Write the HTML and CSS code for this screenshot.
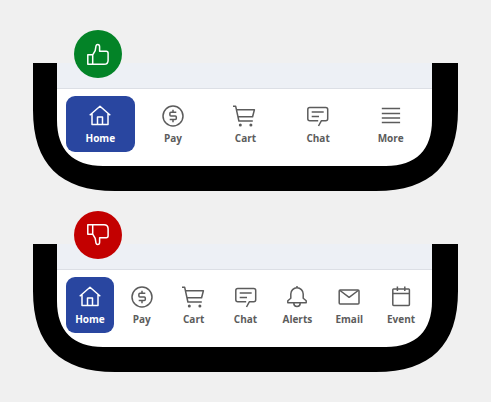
FILE: index.html
```html
<!DOCTYPE html>
<html lang="en">
<head>
<meta charset="utf-8">
<title>Bottom navigation</title>
<link rel="stylesheet" href="styles.css">
</head>
<body>
<svg class="symbols" aria-hidden="true">
  <symbol id="home" viewBox="0 0 24 24"><path d="M1.7 11.3 12 2.2l10.3 9.1M4 9.8v10.7h16V9.8M9.5 20.5V13h5v7.5"/></symbol>
  <symbol id="pay" viewBox="0 0 24 24"><circle cx="12" cy="12" r="10"/><path d="M15.3 8.3H9.9q-1 0-1 1v1.6q0 1 1 1h4.4q1 0 1 1v1.7q0 1-1 1H8.7M12 5.8v2.5m0 7.3v2.6"/></symbol>
  <symbol id="cart" viewBox="0 0 24 24"><path d="M0 2.3h2.7L5.9 17h13.9M3.6 5.7h17.8l-1.8 7H5.1"/><circle class="solid" cx="7.3" cy="20.9" r="1.5"/><circle class="solid" cx="17.9" cy="20.9" r="1.5"/></symbol>
  <symbol id="chat" viewBox="0 0 24 24"><path d="M12.2 16.8H3.8q-2 0-2-2V5.6q0-2 2-2h15.9q2 0 2 2v9.2q0 2-2 2h-4.4L12.5 22M5.7 8h12M5.7 12.4H13"/></symbol>
  <symbol id="more" viewBox="0 0 24 24"><path d="M2.8 4.5h18.3M2.8 9.4h18.3M2.8 14h18.3M2.8 18.6h18.3"/></symbol>
  <symbol id="alerts" viewBox="0 0 24 24"><path d="M12 1v1.8M5.8 9a6.2 6.2 0 0 1 12.4 0v4.2l3 2.6v2H2.8v-2l3-2.6zM8.8 18.3a3.2 3.2 0 0 0 6.4 0"/></symbol>
  <symbol id="email" viewBox="0 0 24 24"><rect x="2.2" y="4.9" width="19.8" height="14" rx="1"/><path d="m3 5.5 9.1 6.8 9.1-6.8"/></symbol>
  <symbol id="event" viewBox="0 0 24 24"><rect x="3.8" y="4" width="16.6" height="16.4" rx=".8"/><path d="M3.8 8.4h16.6M8.4 1.6V6M15.8 1.6V6"/></symbol>
  <symbol id="thumb" viewBox="0 0 24 24"><path d="M1.8 12.7h4.9v9.6H1.8zM6.7 12.9l2.5-4.2.8-4.8q.3-1.4 1.7-1.4 1.9 0 1.9 2.3v4.5h6.6q1.9 0 1.9 2v6.9q0 4.1-4.1 4.1H6.7"/></symbol>
  <symbol id="bezel" viewBox="0 0 425 128"><path d="M0 0H24V57C24 87 40 103 70 103H353C383 103 399 87 399 57V0H425V47C425 101 398 128 343 128H82C27 128 0 101 0 47Z"/></symbol>
</svg>

<main class="page">
  <section class="phone">
    <div class="badge badge-good"><svg class="icon"><use href="#thumb"/></svg></div>
    <div class="screen">
      <nav class="tabs">
        <a class="tab active"><svg class="icon"><use href="#home"/></svg><span>Home</span></a>
        <a class="tab"><svg class="icon"><use href="#pay"/></svg><span>Pay</span></a>
        <a class="tab"><svg class="icon"><use href="#cart"/></svg><span>Cart</span></a>
        <a class="tab"><svg class="icon"><use href="#chat"/></svg><span>Chat</span></a>
        <a class="tab"><svg class="icon"><use href="#more"/></svg><span>More</span></a>
      </nav>
    </div>
    <svg class="bezel"><use href="#bezel"/></svg>
  </section>

  <section class="phone">
    <div class="badge badge-bad"><svg class="icon"><use href="#thumb"/></svg></div>
    <div class="screen">
      <nav class="tabs">
        <a class="tab active"><svg class="icon"><use href="#home"/></svg><span>Home</span></a>
        <a class="tab"><svg class="icon"><use href="#pay"/></svg><span>Pay</span></a>
        <a class="tab"><svg class="icon"><use href="#cart"/></svg><span>Cart</span></a>
        <a class="tab"><svg class="icon"><use href="#chat"/></svg><span>Chat</span></a>
        <a class="tab"><svg class="icon"><use href="#alerts"/></svg><span>Alerts</span></a>
        <a class="tab"><svg class="icon"><use href="#email"/></svg><span>Email</span></a>
        <a class="tab"><svg class="icon"><use href="#event"/></svg><span>Event</span></a>
      </nav>
    </div>
    <svg class="bezel"><use href="#bezel"/></svg>
  </section>
</main>
</body>
</html>
```

FILE: styles.css
```css
* { box-sizing: border-box; }
body {
  margin: 0;
  background: #f0f0f0;
  font-family: "Open Sans", "Noto Sans", sans-serif;
}
.symbols { position: absolute; width: 0; height: 0; }
.page {
  display: flex;
  flex-direction: column;
  gap: 53px;
  height: 402px;
  padding: 63px 33px 0;
}
.phone { position: relative; height: 128px; padding: 0 26px 0 24px; }
.screen {
  height: 103px;
  padding-top: 25px;
  background: #edf0f5;
}
.tabs {
  display: flex;
  gap: 4px;
  height: 78px;
  padding: 7px 7px 14px 9px;
  background: #fff;
  border-top: 1px solid #dcdfe5;
}
.tab {
  flex: 1 1 0;
  min-width: 0;
  display: flex;
  flex-direction: column;
  align-items: center;
  padding-top: 8px;
  border-radius: 9px;
  color: #5c5c5c;
  font-size: 10px;
  font-weight: 700;
  line-height: 14px;
}
.tab span { margin-top: 3px; }
.active { background: #2946a0; color: #fff; }
.icon {
  width: 24px;
  height: 24px;
  flex: none;
  fill: none;
  stroke: currentColor;
  stroke-width: 1.5;
  stroke-linejoin: round;
}
.solid { fill: currentColor; stroke: none; }
.bezel { position: absolute; left: 0; top: 0; width: 425px; height: 128px; }
.badge {
  position: absolute;
  z-index: 1;
  left: 41px;
  top: -33px;
  display: grid;
  place-items: center;
  width: 48px;
  height: 48px;
  border-radius: 50%;
  color: #fff;
}
.badge-good { background: #038327; }
.badge-bad { background: #c30000; }
.badge-bad .icon { transform: scaleY(-1); }
```
